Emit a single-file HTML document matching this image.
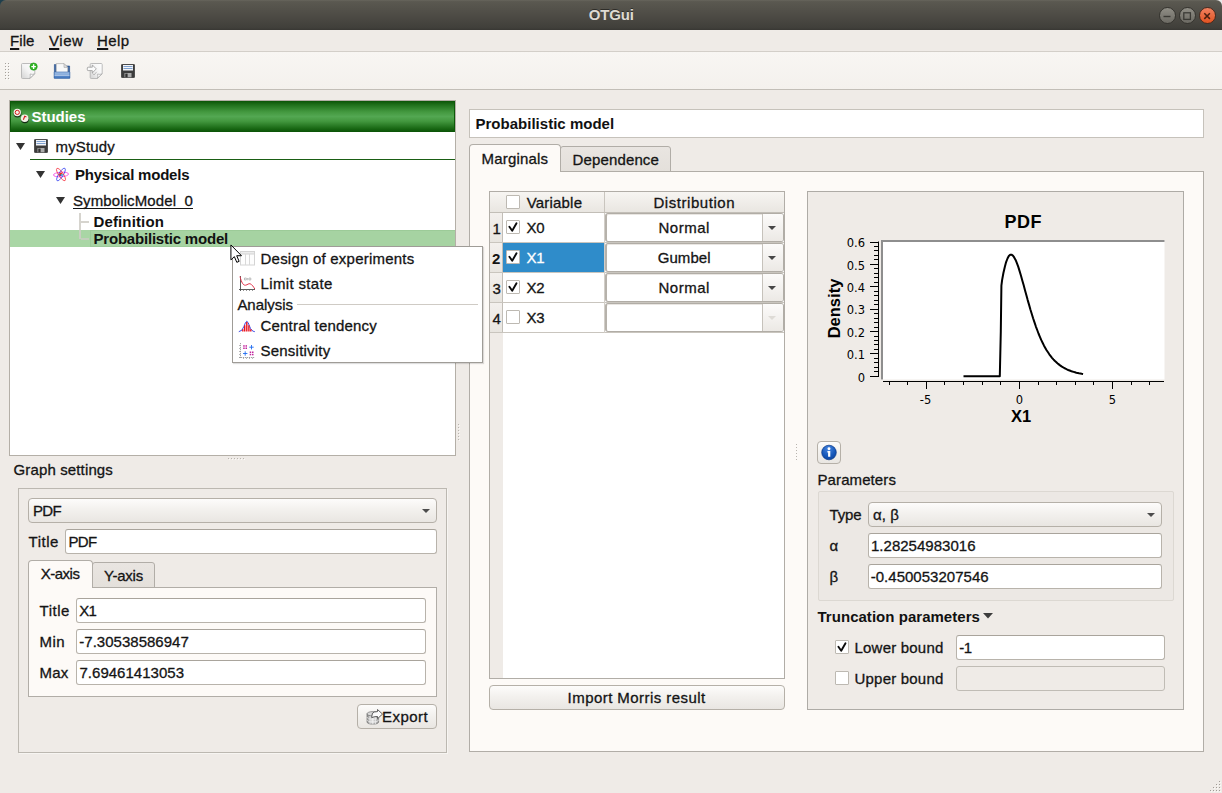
<!DOCTYPE html>
<html lang="en"><head><meta charset="utf-8"><title>OTGui</title>
<style>
html,body{margin:0;padding:0;}
body{width:1222px;height:793px;position:relative;overflow:hidden;background:#efebe7;font-family:"Liberation Sans", "DejaVu Sans", sans-serif;font-size:15px;}
body>div,.abs,.t{position:absolute;box-sizing:border-box;}
.t{white-space:nowrap;line-height:20px;height:20px;}
.t u{text-decoration-skip-ink:none;text-decoration:underline;text-underline-offset:1.500px;text-decoration-thickness:1.500px;}
#corner-l{left:0;top:0;width:8px;height:8px;background:#1f3f4c;}
#corner-r{left:1214px;top:0;width:8px;height:8px;background:#e9e9e9;}
#titlebar{left:0;top:0;width:1222px;height:30px;border-radius:6px 6px 0 0;background:linear-gradient(#6a685f 0,#5d5b53 1px,#5a5850 2px,#4c4a44 55%,#403f3a 93%,#383733 100%);}
.wbtn{width:17px;height:17px;border-radius:50%;border:1px solid #35342f;}
.wbtn.min,.wbtn.max{background:linear-gradient(#8f8d85,#6c6a63);}
.wbtn.close{background:linear-gradient(#f08160,#e25321);border-color:#4a2a1e;}
.btn{background:linear-gradient(#fdfcfb,#f3f1ee 45%,#e9e6e2);border:1px solid #b5b0a8;border-radius:4px;}
.edit{background:#fff;border:1px solid #b8b3ab;border-top-color:#a9a49c;border-radius:3px;}
</style></head>
<body>
<div id="corner-l"></div><div id="corner-r"></div>
<div id="titlebar"></div>
<span class="t" id="t_title" style="top:4.70px;font-size:15px;font-weight:bold;color:#dfdbd2;letter-spacing:-0.166px;text-shadow:0 -1px 0 rgba(0,0,0,.45);left:611.3px;transform:translateX(-50%);">OTGui</span>
<div class="wbtn min" style="left:1158.9px;top:6.500px"></div>
<div class="wbtn max" style="left:1179.0px;top:6.500px"></div>
<div class="wbtn close" style="left:1199.1px;top:6.500px"></div>
<svg class="abs" style="left:1158.400px;top:6.500px" width="60" height="18" viewBox="0 0 60 18">
<path d="M5.5 9.5h7" stroke="#3b3a35" stroke-width="1.4" fill="none"/>
<rect x="25.8" y="5.8" width="6.6" height="6.6" stroke="#3b3a35" stroke-width="1.3" fill="none"/>
<path d="M46.3 6.3l5.6 5.6M51.9 6.3l-5.6 5.6" stroke="#4a1f0f" stroke-width="1.5" fill="none"/>
</svg>
<div style="left:0px;top:30px;width:1222px;height:22px;background:#efebe7;border-bottom:1px solid #d3cfc9;"></div>
<span class="t" id="t_m_file" style="top:31.00px;font-size:15px;font-weight:normal;color:#141414;letter-spacing:0.078px;-webkit-text-stroke:.3px;left:10px;"><u>F</u>ile</span>
<span class="t" id="t_m_view" style="top:31.00px;font-size:15px;font-weight:normal;color:#141414;letter-spacing:0.562px;-webkit-text-stroke:.3px;left:49px;"><u>V</u>iew</span>
<span class="t" id="t_m_help" style="top:31.00px;font-size:15px;font-weight:normal;color:#141414;letter-spacing:0.406px;-webkit-text-stroke:.3px;left:97px;"><u>H</u>elp</span>
<div style="left:0px;top:52px;width:1222px;height:38px;background:linear-gradient(#f8f6f3,#f4f1ed);border-bottom:1px solid #c2beb7;"></div>
<div style="left:5px;top:63px;width:1px;height:1px;background:#a5a19b;"></div>
<div style="left:6px;top:64px;width:1px;height:1px;background:#fdfcfb;"></div>
<div style="left:8px;top:63px;width:1px;height:1px;background:#a5a19b;"></div>
<div style="left:9px;top:64px;width:1px;height:1px;background:#fdfcfb;"></div>
<div style="left:5px;top:66px;width:1px;height:1px;background:#a5a19b;"></div>
<div style="left:6px;top:67px;width:1px;height:1px;background:#fdfcfb;"></div>
<div style="left:8px;top:66px;width:1px;height:1px;background:#a5a19b;"></div>
<div style="left:9px;top:67px;width:1px;height:1px;background:#fdfcfb;"></div>
<div style="left:5px;top:69px;width:1px;height:1px;background:#a5a19b;"></div>
<div style="left:6px;top:70px;width:1px;height:1px;background:#fdfcfb;"></div>
<div style="left:8px;top:69px;width:1px;height:1px;background:#a5a19b;"></div>
<div style="left:9px;top:70px;width:1px;height:1px;background:#fdfcfb;"></div>
<div style="left:5px;top:72px;width:1px;height:1px;background:#a5a19b;"></div>
<div style="left:6px;top:73px;width:1px;height:1px;background:#fdfcfb;"></div>
<div style="left:8px;top:72px;width:1px;height:1px;background:#a5a19b;"></div>
<div style="left:9px;top:73px;width:1px;height:1px;background:#fdfcfb;"></div>
<div style="left:5px;top:75px;width:1px;height:1px;background:#a5a19b;"></div>
<div style="left:6px;top:76px;width:1px;height:1px;background:#fdfcfb;"></div>
<div style="left:8px;top:75px;width:1px;height:1px;background:#a5a19b;"></div>
<div style="left:9px;top:76px;width:1px;height:1px;background:#fdfcfb;"></div>
<div style="left:5px;top:78px;width:1px;height:1px;background:#a5a19b;"></div>
<div style="left:6px;top:79px;width:1px;height:1px;background:#fdfcfb;"></div>
<div style="left:8px;top:78px;width:1px;height:1px;background:#a5a19b;"></div>
<div style="left:9px;top:79px;width:1px;height:1px;background:#fdfcfb;"></div>
<svg class="abs" style="left:20px;top:62px" width="18" height="18" viewBox="0 0 18 18">
<defs><linearGradient id="pg" x1="1" y1="0" x2="0" y2="1"><stop offset="0" stop-color="#ffffff"/><stop offset=".5" stop-color="#f4f4f4"/><stop offset="1" stop-color="#d2d2d2"/></linearGradient></defs>
<path d="M1.500 2.500q0-1 1-1h11.300q1 0 1 1v9.200l-4.800 4.800h-7.500q-1 0-1-1z" fill="url(#pg)" stroke="#b4b4b4" stroke-width=".9"/>
<path d="M9.800 16.300q.8-1.800.3-4.300q2.300.9 4.500-.2z" fill="#fdfdfd" stroke="#a6a6a6" stroke-width=".7" stroke-linejoin="round"/>
<circle cx="13.600" cy="4.600" r="3.700" fill="#2db320" stroke="#1b9412" stroke-width=".5"/>
<path d="M11.300 4.600h4.600M13.600 2.300v4.600" stroke="#fff" stroke-width="1.400"/>
</svg>
<svg class="abs" style="left:53px;top:62px" width="18" height="18" viewBox="0 0 18 18">
<defs><linearGradient id="og" x1="0" y1="0" x2="0" y2="1"><stop offset="0" stop-color="#a9c5e8"/><stop offset=".45" stop-color="#7ba3d8"/><stop offset=".55" stop-color="#5b8acb"/><stop offset="1" stop-color="#4377bd"/></linearGradient></defs>
<path d="M1.400 2.500h3.200l1 1.500h11v12h-15.200z" fill="#2f5c9d" stroke="#264f8b" stroke-width=".6"/>
<path d="M3.200 1.600h7.800l3.800 3.800v6.600h-11.600z" fill="#f8f8f8" stroke="#aaa" stroke-width=".7"/>
<path d="M11 1.600v3.800h3.800z" fill="#e2e2e2" stroke="#a2a2a2" stroke-width=".6" stroke-linejoin="round"/>
<path d="M1.200 16.300v-6.300h15.600v6.300z" fill="url(#og)" stroke="#3567ab" stroke-width=".6"/>
<path d="M1.500 13.300h15" stroke="#c3d6ef" stroke-width=".9"/>
</svg>
<svg class="abs" style="left:86px;top:62px" width="18" height="18" viewBox="0 0 18 18">
<path d="M4.200 2.500q0-1 1-1h10q1 0 1 1v9.200l-4.800 4.800h-6.200q-1 0-1-1z" fill="url(#pg)" stroke="#b4b4b4" stroke-width=".9"/>
<path d="M11.300 16.300q.8-1.800.3-4.300q2.300.9 4.500-.2z" fill="#fdfdfd" stroke="#a6a6a6" stroke-width=".7" stroke-linejoin="round"/>
<path d="M1.300 6q0-.8.800-.8h4.200v-2.300l4 4l-4 4v-2.300h-4.200q-.8 0-.8-.8z" fill="#fbfbfb" stroke="#9a9a9a" stroke-width=".8" stroke-linejoin="round"/>
<path d="M6.300 11.200l1.800 1.800l2.600-3.200" fill="none" stroke="#b8b8b8" stroke-width=".9"/>
</svg>
<svg class="abs" style="left:121px;top:64px" width="14" height="14" viewBox="0 0 14 14"><rect x=".3" y=".3" width="13.400" height="13.400" rx="1.200" fill="#3c3c3c" stroke="#2b2b2b" stroke-width=".6"/>
<rect x="2" y="1" width="10" height="5.500" fill="#f3f5f9"/>
<rect x="2.500" y="2" width="9" height="1" fill="#7fa1cf"/><rect x="2.500" y="4" width="9" height="1" fill="#7fa1cf"/>
<rect x="3.500" y="9" width="7" height="4.300" fill="#ababab"/>
<rect x="4.300" y="9.600" width="2.300" height="3.700" fill="#303030"/></svg>
<div style="left:9px;top:100px;width:447px;height:356px;background:#fff;border:1px solid #b4afa7;"></div>
<div style="left:10px;top:101px;width:445px;height:31px;background:linear-gradient(#0b5407 0%,#1f6f1b 12%,#43983f 35%,#53a752 50%,#43983f 65%,#176612 90%,#0a5206 100%);box-shadow:inset 1px 0 #0d5909,inset -1px 0 #0d5909;"></div>
<svg class="abs" style="left:12px;top:107px" width="18" height="18" viewBox="0 0 18 18">
<circle cx="5.500" cy="6.600" r="3.900" fill="#07150a" opacity=".8"/><circle cx="5.300" cy="5.500" r="3.700" fill="#f3f2e6"/>
<circle cx="5.300" cy="5.400" r="2.100" fill="none" stroke="#d31a1a" stroke-width="1"/>
<circle cx="12.900" cy="12.300" r="3.900" fill="#07150a" opacity=".8"/><circle cx="12.700" cy="11.200" r="3.800" fill="#f3f2e6"/>
<path d="M11.400 12.700L12.700 9.300L14.400 9.900" fill="none" stroke="#d31a1a" stroke-width="1.100"/>
</svg>
<span class="t" id="t_studies" style="top:107.20px;font-size:15px;font-weight:bold;color:#fff;letter-spacing:-0.027px;left:31.5px;">Studies</span>
<svg class="abs" style="left:15.500px;top:142.800px" width="9" height="7"><path d="M0 0h9l-4.500 7z" fill="#333"/></svg>
<svg class="abs" style="left:34px;top:139px" width="14" height="14" viewBox="0 0 14 14"><rect x=".3" y=".3" width="13.400" height="13.400" rx="1.200" fill="#3c3c3c" stroke="#2b2b2b" stroke-width=".6"/>
<rect x="2" y="1" width="10" height="5.500" fill="#f3f5f9"/>
<rect x="2.500" y="2" width="9" height="1" fill="#7fa1cf"/><rect x="2.500" y="4" width="9" height="1" fill="#7fa1cf"/>
<rect x="3.500" y="9" width="7" height="4.300" fill="#ababab"/>
<rect x="4.300" y="9.600" width="2.300" height="3.700" fill="#303030"/></svg>
<span class="t" id="t_mystudy" style="top:136.90px;font-size:15px;font-weight:normal;color:#141414;letter-spacing:0.163px;-webkit-text-stroke:.3px;left:55.5px;">myStudy</span>
<div style="left:30px;top:159px;width:425px;height:1px;background:#1a5e14;"></div>
<svg class="abs" style="left:35.500px;top:170.800px" width="9" height="7"><path d="M0 0h9l-4.500 7z" fill="#333"/></svg>
<svg class="abs" style="left:52px;top:166px" width="18" height="17" viewBox="0 0 18 17">
<g fill="none" stroke-width=".75">
<ellipse cx="9" cy="8.500" rx="7.600" ry="2.300" stroke="#f03ae0" transform="rotate(-4 9 8.500)"/>
<ellipse cx="9" cy="8.500" rx="7.300" ry="2.300" stroke="#3540f0" transform="rotate(-58 9 8.500)"/>
<ellipse cx="9" cy="8.500" rx="7.300" ry="2.300" stroke="#f5303f" transform="rotate(56 9 8.500)"/>
</g><circle cx="8.800" cy="8.300" r="1.700" fill="#e8391c"/><circle cx="9.900" cy="9" r="1" fill="#35b9ea"/><circle cx="8" cy="9.300" r=".8" fill="#2a35d8"/>
</svg>
<span class="t" id="t_physmodels" style="top:164.60px;font-size:15px;font-weight:bold;color:#111;letter-spacing:-0.218px;left:75px;">Physical models</span>
<svg class="abs" style="left:55.500px;top:196.800px" width="9" height="7"><path d="M0 0h9l-4.500 7z" fill="#333"/></svg>
<span class="t" id="t_symbolic" style="top:191.00px;font-size:15px;font-weight:normal;color:#141414;letter-spacing:0.107px;text-decoration:underline;text-underline-offset:2px;text-decoration-skip-ink:none;-webkit-text-stroke:.3px;left:73px;">SymbolicModel_0</span>
<div style="left:10px;top:230px;width:445px;height:17px;background:#a9d6a5;"></div>
<div style="left:90px;top:230px;width:365px;height:17px;background:#a6d3a2;border:1px solid #9ccb98;border-right:0;"></div>
<div style="left:79px;top:213px;width:2px;height:26px;background:#cfccc6;opacity:.85;"></div>
<div style="left:81px;top:221px;width:8px;height:2px;background:#cfccc6;opacity:.85;"></div>
<div style="left:81px;top:238px;width:8px;height:2px;background:#cfccc6;opacity:.7;"></div>
<span class="t" id="t_definition" style="top:212.00px;font-size:15px;font-weight:bold;color:#111;letter-spacing:0.134px;left:93.5px;">Definition</span>
<span class="t" id="t_probmodel1" style="top:228.90px;font-size:15px;font-weight:bold;color:#111;letter-spacing:-0.204px;left:93.5px;">Probabilistic model</span>
<div style="left:228px;top:458px;width:1px;height:1px;background:#b9b5af;"></div>
<div style="left:229px;top:459px;width:1px;height:1px;background:#fbf9f7;"></div>
<div style="left:231px;top:458px;width:1px;height:1px;background:#b9b5af;"></div>
<div style="left:232px;top:459px;width:1px;height:1px;background:#fbf9f7;"></div>
<div style="left:234px;top:458px;width:1px;height:1px;background:#b9b5af;"></div>
<div style="left:235px;top:459px;width:1px;height:1px;background:#fbf9f7;"></div>
<div style="left:237px;top:458px;width:1px;height:1px;background:#b9b5af;"></div>
<div style="left:238px;top:459px;width:1px;height:1px;background:#fbf9f7;"></div>
<div style="left:240px;top:458px;width:1px;height:1px;background:#b9b5af;"></div>
<div style="left:241px;top:459px;width:1px;height:1px;background:#fbf9f7;"></div>
<div style="left:243px;top:458px;width:1px;height:1px;background:#b9b5af;"></div>
<div style="left:244px;top:459px;width:1px;height:1px;background:#fbf9f7;"></div>
<div style="left:458px;top:424px;width:1px;height:1px;background:#b9b5af;"></div>
<div style="left:459px;top:425px;width:1px;height:1px;background:#fbf9f7;"></div>
<div style="left:458px;top:427px;width:1px;height:1px;background:#b9b5af;"></div>
<div style="left:459px;top:428px;width:1px;height:1px;background:#fbf9f7;"></div>
<div style="left:458px;top:430px;width:1px;height:1px;background:#b9b5af;"></div>
<div style="left:459px;top:431px;width:1px;height:1px;background:#fbf9f7;"></div>
<div style="left:458px;top:433px;width:1px;height:1px;background:#b9b5af;"></div>
<div style="left:459px;top:434px;width:1px;height:1px;background:#fbf9f7;"></div>
<div style="left:458px;top:436px;width:1px;height:1px;background:#b9b5af;"></div>
<div style="left:459px;top:437px;width:1px;height:1px;background:#fbf9f7;"></div>
<div style="left:458px;top:439px;width:1px;height:1px;background:#b9b5af;"></div>
<div style="left:459px;top:440px;width:1px;height:1px;background:#fbf9f7;"></div>
<span class="t" id="t_graphsettings" style="top:460.00px;font-size:15px;font-weight:normal;color:#141414;letter-spacing:0.138px;-webkit-text-stroke:.3px;left:13.5px;">Graph settings</span>
<div style="left:18px;top:488px;width:429px;height:265px;border:1px solid #bcb8b1;box-shadow:1px 1px 0 #f7f5f2;"></div>
<div class="btn" style="left:28px;top:498px;width:409px;height:25px;"></div>
<svg class="abs" style="left:422px;top:509px" width="8" height="4"><path d="M0 0h8l-4 4z" fill="#4c4c4c"/></svg>
<span class="t" id="t_gs_pdf" style="top:501.00px;font-size:15px;font-weight:normal;color:#141414;letter-spacing:-0.667px;-webkit-text-stroke:.3px;left:33px;">PDF</span>
<span class="t" id="t_gs_title" style="top:531.50px;font-size:15px;font-weight:normal;color:#141414;letter-spacing:0.544px;-webkit-text-stroke:.3px;left:28.5px;">Title</span>
<div class="edit" style="left:65px;top:529px;width:372px;height:25px;"></div>
<span class="t" id="t_gs_pdf2" style="top:531.50px;font-size:15px;font-weight:normal;color:#141414;letter-spacing:-0.667px;-webkit-text-stroke:.3px;left:68.5px;">PDF</span>
<div style="left:28px;top:587px;width:409px;height:110px;background:#fdfaf7;border:1px solid #b1ada7;"></div>
<div style="left:92px;top:562px;width:63px;height:26px;background:linear-gradient(#e9e5e1,#e4e0db);border:1px solid #b1ada7;border-radius:3px 3px 0 0;"></div>
<div style="left:28px;top:560px;width:65px;height:28px;background:#fdfaf7;border:1px solid #b1ada7;border-bottom:0;border-radius:4px 4px 0 0;"></div>
<span class="t" id="t_xaxis" style="top:564.30px;font-size:15px;font-weight:normal;color:#141414;letter-spacing:-0.481px;-webkit-text-stroke:.3px;left:40.7px;">X-axis</span>
<span class="t" id="t_yaxis" style="top:566.20px;font-size:15px;font-weight:normal;color:#141414;letter-spacing:-0.219px;-webkit-text-stroke:.3px;left:104px;">Y-axis</span>
<span class="t" id="t_ax_title" style="top:600.50px;font-size:15px;font-weight:normal;color:#141414;letter-spacing:0.544px;-webkit-text-stroke:.3px;left:39.5px;">Title</span>
<div class="edit" style="left:76px;top:598px;width:350px;height:25px;"></div>
<span class="t" id="t_ax_x1" style="top:600.50px;font-size:15px;font-weight:normal;color:#141414;letter-spacing:-0.680px;-webkit-text-stroke:.3px;left:79.3px;">X1</span>
<span class="t" id="t_ax_min" style="top:631.50px;font-size:15px;font-weight:normal;color:#141414;letter-spacing:0.443px;-webkit-text-stroke:.3px;left:39.5px;">Min</span>
<div class="edit" style="left:76px;top:629px;width:350px;height:25px;"></div>
<span class="t" id="t_ax_minv" style="top:631.50px;font-size:15px;font-weight:normal;color:#141414;letter-spacing:0.016px;-webkit-text-stroke:.3px;left:79.3px;">-7.30538586947</span>
<span class="t" id="t_ax_max" style="top:662.50px;font-size:15px;font-weight:normal;color:#141414;letter-spacing:0.219px;-webkit-text-stroke:.3px;left:39.5px;">Max</span>
<div class="edit" style="left:76px;top:660px;width:350px;height:25px;"></div>
<span class="t" id="t_ax_maxv" style="top:662.50px;font-size:15px;font-weight:normal;color:#141414;letter-spacing:0.017px;-webkit-text-stroke:.3px;left:79.5px;">7.69461413053</span>
<div class="btn" style="left:357px;top:704px;width:80px;height:25px;"></div>
<svg class="abs" style="left:365.600px;top:708.700px" width="18" height="17" viewBox="0 0 18 17">
<defs><linearGradient id="cg" x1="0" y1="0" x2="1" y2="0"><stop offset="0" stop-color="#8d8d8d"/><stop offset=".45" stop-color="#e6e6e6"/><stop offset="1" stop-color="#9a9a9a"/></linearGradient></defs>
<path d="M1 4.800v8q0 2.300 5.800 2.300t5.800-2.300v-8z" fill="url(#cg)" stroke="#6e6e6e" stroke-width=".7"/>
<ellipse cx="6.800" cy="4.800" rx="5.800" ry="2.200" fill="#d9d9d9" stroke="#6e6e6e" stroke-width=".7"/>
<path d="M1 8q0 2.200 5.800 2.200t5.800-2.200M1 10.700q0 2.200 5.800 2.200t5.800-2.200M4 7v8M6.800 7.300v8M9.600 7v8" fill="none" stroke="#f4f4f4" stroke-width=".7"/>
<path d="M6.500 4.200q1.500-1.700 5-1.600v-2.100l5 4.600l-5 4.600v-2.200q-3.200-.2-5.800 1.200q.2-2.600.8-4.500z" fill="#fbfbfb" stroke="#4d4d4d" stroke-width=".9" stroke-linejoin="round"/>
</svg>
<span class="t" id="t_export" style="top:707.00px;font-size:15px;font-weight:normal;color:#141414;letter-spacing:0.440px;-webkit-text-stroke:.3px;left:382px;">Export</span>
<div style="left:469px;top:109px;width:735px;height:29px;background:#fff;border:1px solid #c6c2bb;"></div>
<span class="t" id="t_probmodel2" style="top:114.00px;font-size:15px;font-weight:bold;color:#111;letter-spacing:0.022px;left:475.4px;">Probabilistic model</span>
<div style="left:469px;top:171px;width:735px;height:581px;background:#fdfaf7;border:1px solid #b1ada7;"></div>
<div style="left:560px;top:146px;width:111px;height:26px;background:linear-gradient(#e9e5e1,#e4e0db);border:1px solid #b1ada7;border-radius:3px 3px 0 0;"></div>
<div style="left:469px;top:144px;width:92px;height:28px;background:#fdfaf7;border:1px solid #b1ada7;border-bottom:0;border-radius:4px 4px 0 0;"></div>
<span class="t" id="t_marginals" style="top:148.80px;font-size:15px;font-weight:normal;color:#141414;letter-spacing:0.185px;-webkit-text-stroke:.3px;left:481.6px;">Marginals</span>
<span class="t" id="t_dependence" style="top:150.20px;font-size:15px;font-weight:normal;color:#141414;letter-spacing:0.142px;-webkit-text-stroke:.3px;left:572.5px;">Dependence</span>
<div style="left:489px;top:191px;width:296px;height:488px;background:#fff;border:1px solid #b1ada7;"></div>
<div style="left:490px;top:192px;width:294px;height:21px;background:linear-gradient(#f7f5f2,#e9e6e1);border-bottom:1px solid #c2beb7;"></div>
<div style="left:490px;top:213px;width:13px;height:465px;background:#efebe7;"></div>
<div style="left:490px;top:192px;width:13px;height:21px;background:linear-gradient(#f7f5f2,#e9e6e1);border-bottom:1px solid #c2beb7;"></div>
<div style="left:604px;top:192px;width:1px;height:20px;background:#c9c5be;"></div>
<div style="left:490px;top:242px;width:294px;height:1px;background:#c9c5be;"></div>
<div style="left:490px;top:213px;width:13px;height:29px;background:linear-gradient(#f3f0ed,#e8e5e0);border-right:1px solid #c2beb7;"></div>
<div style="left:490px;top:272px;width:294px;height:1px;background:#c9c5be;"></div>
<div style="left:490px;top:243px;width:13px;height:29px;background:linear-gradient(#f3f0ed,#e8e5e0);border-right:1px solid #c2beb7;"></div>
<div style="left:490px;top:302px;width:294px;height:1px;background:#c9c5be;"></div>
<div style="left:490px;top:273px;width:13px;height:29px;background:linear-gradient(#f3f0ed,#e8e5e0);border-right:1px solid #c2beb7;"></div>
<div style="left:490px;top:332px;width:294px;height:1px;background:#c9c5be;"></div>
<div style="left:490px;top:303px;width:13px;height:29px;background:linear-gradient(#f3f0ed,#e8e5e0);border-right:1px solid #c2beb7;"></div>
<div style="left:604px;top:213px;width:1px;height:120px;background:#d2cec8;"></div>
<div style="left:503px;top:243px;width:101px;height:29px;background:#2f8cca;"></div>
<div style="left:506px;top:195px;width:14px;height:14px;background:#fff;border:1px solid #bdb9b2;border-radius:1px;"></div>
<span class="t" id="t_variable" style="top:192.50px;font-size:15px;font-weight:normal;color:#141414;letter-spacing:0.197px;-webkit-text-stroke:.3px;left:526.7px;">Variable</span>
<span class="t" id="t_distribution" style="top:192.50px;font-size:15px;font-weight:normal;color:#141414;letter-spacing:0.556px;-webkit-text-stroke:.3px;left:694.3px;transform:translateX(-50%);">Distribution</span>
<span class="t" id="t_rn0" style="top:219.00px;font-size:15px;font-weight:normal;color:#141414;letter-spacing:-0.844px;-webkit-text-stroke:.3px;left:496.2px;transform:translateX(-50%);">1</span>
<div style="left:506px;top:220px;width:14px;height:14px;background:#fff;border:1px solid #bdb9b2;border-radius:1px;"></div><svg class="abs" style="left:506px;top:220px" width="14" height="14" viewBox="0 0 14 14"><path d="M3.400 6.700L6.200 10.800L10.500 3.300" fill="none" stroke="#0c0c0c" stroke-width="1.900" stroke-linecap="round" stroke-linejoin="round"/></svg>
<span class="t" id="t_xn0" style="top:218.30px;font-size:15px;font-weight:normal;color:#141414;letter-spacing:-0.180px;-webkit-text-stroke:.3px;left:526.4px;">X0</span>
<div style="left:605px;top:213px;width:179px;height:29px;background:#fff;border:1px solid #b1ada6;border-left:2px solid #b6b2ab;border-radius:3px;box-shadow:inset 0 1px 0 #e9e6e2;"></div>
<div style="left:762px;top:214px;width:21px;height:27px;background:linear-gradient(#fcfbfa,#ece9e5);border-left:1px solid #c6c2bb;border-radius:0 2px 2px 0;"></div>
<svg class="abs" style="left:768px;top:226px" width="8" height="4"><path d="M0 0h8l-4 4z" fill="#474747"/></svg>
<span class="t" id="t_dist0" style="top:218.30px;font-size:15px;font-weight:normal;color:#141414;letter-spacing:0.493px;-webkit-text-stroke:.3px;left:684.2px;transform:translateX(-50%);">Normal</span>
<span class="t" id="t_rn1" style="top:249.00px;font-size:15px;font-weight:bold;color:#141414;letter-spacing:0.156px;left:496.2px;transform:translateX(-50%);">2</span>
<div style="left:506px;top:250px;width:14px;height:14px;background:#fff;border:1px solid #bdb9b2;border-radius:1px;"></div><svg class="abs" style="left:506px;top:250px" width="14" height="14" viewBox="0 0 14 14"><path d="M3.400 6.700L6.200 10.800L10.500 3.300" fill="none" stroke="#0c0c0c" stroke-width="1.900" stroke-linecap="round" stroke-linejoin="round"/></svg>
<span class="t" id="t_xn1" style="top:248.30px;font-size:15px;font-weight:normal;color:#fff;letter-spacing:-0.180px;-webkit-text-stroke:.3px;left:526.4px;">X1</span>
<div style="left:605px;top:243px;width:179px;height:29px;background:#fff;border:1px solid #b1ada6;border-left:2px solid #b6b2ab;border-radius:3px;box-shadow:inset 0 1px 0 #e9e6e2;"></div>
<div style="left:762px;top:244px;width:21px;height:27px;background:linear-gradient(#fcfbfa,#ece9e5);border-left:1px solid #c6c2bb;border-radius:0 2px 2px 0;"></div>
<svg class="abs" style="left:768px;top:256px" width="8" height="4"><path d="M0 0h8l-4 4z" fill="#474747"/></svg>
<span class="t" id="t_dist1" style="top:248.30px;font-size:15px;font-weight:normal;color:#141414;letter-spacing:0.078px;-webkit-text-stroke:.3px;left:684.2px;transform:translateX(-50%);">Gumbel</span>
<span class="t" id="t_rn2" style="top:279.00px;font-size:15px;font-weight:normal;color:#141414;letter-spacing:-0.844px;-webkit-text-stroke:.3px;left:496.2px;transform:translateX(-50%);">3</span>
<div style="left:506px;top:280px;width:14px;height:14px;background:#fff;border:1px solid #bdb9b2;border-radius:1px;"></div><svg class="abs" style="left:506px;top:280px" width="14" height="14" viewBox="0 0 14 14"><path d="M3.400 6.700L6.200 10.800L10.500 3.300" fill="none" stroke="#0c0c0c" stroke-width="1.900" stroke-linecap="round" stroke-linejoin="round"/></svg>
<span class="t" id="t_xn2" style="top:278.30px;font-size:15px;font-weight:normal;color:#141414;letter-spacing:-0.180px;-webkit-text-stroke:.3px;left:526.4px;">X2</span>
<div style="left:605px;top:273px;width:179px;height:29px;background:#fff;border:1px solid #b1ada6;border-left:2px solid #b6b2ab;border-radius:3px;box-shadow:inset 0 1px 0 #e9e6e2;"></div>
<div style="left:762px;top:274px;width:21px;height:27px;background:linear-gradient(#fcfbfa,#ece9e5);border-left:1px solid #c6c2bb;border-radius:0 2px 2px 0;"></div>
<svg class="abs" style="left:768px;top:286px" width="8" height="4"><path d="M0 0h8l-4 4z" fill="#474747"/></svg>
<span class="t" id="t_dist2" style="top:278.30px;font-size:15px;font-weight:normal;color:#141414;letter-spacing:0.493px;-webkit-text-stroke:.3px;left:684.2px;transform:translateX(-50%);">Normal</span>
<span class="t" id="t_rn3" style="top:309.00px;font-size:15px;font-weight:normal;color:#141414;letter-spacing:-0.844px;-webkit-text-stroke:.3px;left:496.2px;transform:translateX(-50%);">4</span>
<div style="left:506px;top:310px;width:14px;height:14px;background:#fff;border:1px solid #bdb9b2;border-radius:1px;"></div>
<span class="t" id="t_xn3" style="top:308.30px;font-size:15px;font-weight:normal;color:#141414;letter-spacing:-0.180px;-webkit-text-stroke:.3px;left:526.4px;">X3</span>
<div style="left:605px;top:303px;width:179px;height:29px;background:#fff;border:1px solid #b1ada6;border-left:2px solid #b6b2ab;border-radius:3px;box-shadow:inset 0 1px 0 #e9e6e2;"></div>
<div style="left:762px;top:304px;width:21px;height:27px;background:linear-gradient(#fcfbfa,#ece9e5);border-left:1px solid #c6c2bb;border-radius:0 2px 2px 0;"></div>
<svg class="abs" style="left:768px;top:316px" width="8" height="4"><path d="M0 0h8l-4 4z" fill="#dedbd6"/></svg>
<div class="btn" style="left:489px;top:685px;width:296px;height:25px;"></div>
<span class="t" id="t_importmorris" style="top:687.70px;font-size:15px;font-weight:normal;color:#141414;letter-spacing:0.441px;-webkit-text-stroke:.3px;left:636.6px;transform:translateX(-50%);">Import Morris result</span>
<div style="left:796px;top:444px;width:1px;height:1px;background:#b9b5af;"></div>
<div style="left:797px;top:445px;width:1px;height:1px;background:#fbf9f7;"></div>
<div style="left:796px;top:447px;width:1px;height:1px;background:#b9b5af;"></div>
<div style="left:797px;top:448px;width:1px;height:1px;background:#fbf9f7;"></div>
<div style="left:796px;top:450px;width:1px;height:1px;background:#b9b5af;"></div>
<div style="left:797px;top:451px;width:1px;height:1px;background:#fbf9f7;"></div>
<div style="left:796px;top:453px;width:1px;height:1px;background:#b9b5af;"></div>
<div style="left:797px;top:454px;width:1px;height:1px;background:#fbf9f7;"></div>
<div style="left:796px;top:456px;width:1px;height:1px;background:#b9b5af;"></div>
<div style="left:797px;top:457px;width:1px;height:1px;background:#fbf9f7;"></div>
<div style="left:796px;top:459px;width:1px;height:1px;background:#b9b5af;"></div>
<div style="left:797px;top:460px;width:1px;height:1px;background:#fbf9f7;"></div>
<div style="left:807px;top:191px;width:377px;height:519px;background:#efebe7;border:1px solid #aeaba6;"></div>
<span class="t" id="t_pdftitle" style="top:212.00px;font-size:18px;font-weight:bold;color:#000;letter-spacing:0.500px;left:1023.3px;transform:translateX(-50%);">PDF</span>
<svg class="abs" style="left:800px;top:180px" width="400" height="260" viewBox="0 0 400 260" font-family='"DejaVu Sans","Liberation Sans",sans-serif'><rect x="81" y="60" width="283.5" height="139.5" fill="#fff"/><path d="M82 199.500v-138.500h282.500" fill="none" stroke="#8e8e8e" stroke-width="2"/><path d="M78.500 61.500v135.300" stroke="#000" stroke-width="1" fill="none"/><path d="M70 196.5h9M74 191.5h5M74 187.5h5M74 182.5h5M74 178.5h5M70 173.5h9M74 169.5h5M74 164.5h5M74 160.5h5M74 156.5h5M70 151.5h9M74 147.5h5M74 142.5h5M74 138.5h5M74 133.5h5M70 129.5h9M74 124.5h5M74 120.5h5M74 115.5h5M74 111.5h5M70 106.5h9M74 102.5h5M74 97.5h5M74 93.5h5M74 88.5h5M70 84.5h9M74 79.5h5M74 75.5h5M74 70.5h5M74 66.5h5M70 62.5h9" stroke="#000" stroke-width="1" fill="none"/><text x="65" y="201.5" font-size="11.500" text-anchor="end" fill="#000">0</text><text x="65" y="179.1" font-size="11.500" text-anchor="end" fill="#000">0.1</text><text x="65" y="156.7" font-size="11.500" text-anchor="end" fill="#000">0.2</text><text x="65" y="134.4" font-size="11.500" text-anchor="end" fill="#000">0.3</text><text x="65" y="112.0" font-size="11.500" text-anchor="end" fill="#000">0.4</text><text x="65" y="89.6" font-size="11.500" text-anchor="end" fill="#000">0.5</text><text x="65" y="67.2" font-size="11.500" text-anchor="end" fill="#000">0.6</text><path d="M83 201.500h281" stroke="#000" stroke-width="1" fill="none"/><path d="M89.5 201v4M107.5 201v4M126.5 201v8M144.5 201v4M163.5 201v4M182.5 201v4M200.5 201v4M219.5 201v8M238.5 201v4M256.5 201v4M275.5 201v4M293.5 201v4M312.5 201v8M331.5 201v4M349.5 201v4" stroke="#000" stroke-width="1" fill="none"/><text x="125.5" y="224" font-size="11.500" text-anchor="middle" fill="#000">-5</text><text x="219.4" y="224" font-size="11.500" text-anchor="middle" fill="#000">0</text><text x="312.5" y="224" font-size="11.500" text-anchor="middle" fill="#000">5</text><path d="M163.5 196.3 L199.8 196.3 L200.8 151.5 L201.4 105.7 L202.1 100.1 L203.4 93.0 L204.8 87.0 L206.1 82.1 L207.5 78.5 L208.8 76.1 L210.2 74.8 L211.5 74.7 L212.9 75.6 L214.2 77.4 L215.6 79.9 L216.9 83.2 L218.3 86.9 L219.6 91.1 L221.0 95.7 L222.3 100.4 L223.7 105.3 L225.0 110.2 L226.4 115.2 L227.7 120.1 L229.1 124.9 L230.4 129.5 L231.8 134.0 L233.1 138.3 L234.5 142.4 L235.8 146.3 L237.2 150.0 L238.5 153.5 L239.9 156.8 L241.2 159.9 L242.6 162.7 L243.9 165.4 L245.3 167.9 L246.6 170.2 L248.0 172.3 L249.3 174.3 L250.7 176.1 L252.0 177.8 L253.4 179.4 L254.7 180.8 L256.1 182.1 L257.4 183.3 L258.8 184.4 L260.1 185.4 L261.5 186.4 L262.8 187.2 L264.2 188.0 L265.5 188.7 L266.9 189.4 L268.2 190.0 L269.6 190.5 L270.9 191.0 L272.3 191.5 L273.6 191.9 L275.0 192.3 L276.3 192.7 L277.7 193.0 L279.0 193.3 L280.4 193.5 L281.7 193.8 L283.1 194.0" fill="none" stroke="#000" stroke-width="2" stroke-linejoin="round"/><text x="221" y="242" font-size="16.500" font-weight="bold" text-anchor="middle" fill="#000" font-family='"Liberation Sans",sans-serif'>X1</text><text transform="translate(40 128.500) rotate(-90)" font-size="16.500" font-weight="bold" text-anchor="middle" fill="#000" font-family='"Liberation Sans",sans-serif'>Density</text></svg>
<div class="btn" style="left:817px;top:441px;width:24px;height:23px;"></div>
<svg class="abs" style="left:820px;top:444px" width="18" height="18" viewBox="0 0 18 18">
<defs><radialGradient id="ig" cx=".45" cy=".25" r=".85"><stop offset="0" stop-color="#4585e0"/><stop offset=".6" stop-color="#1556b8"/><stop offset="1" stop-color="#0a3f96"/></radialGradient></defs>
<circle cx="9" cy="8.500" r="7.300" fill="url(#ig)" stroke="#0b3a88" stroke-width=".7"/>
<circle cx="9" cy="4.700" r="1.450" fill="#fff"/><path d="M7.400 7.100h2.900v5.600h-2.200v-4.300h-.7z" fill="#fff"/>
</svg>
<span class="t" id="t_parameters" style="top:470.00px;font-size:15px;font-weight:normal;color:#141414;letter-spacing:0.097px;-webkit-text-stroke:.3px;left:817.5px;">Parameters</span>
<div style="left:818px;top:491px;width:356px;height:110px;background:#ece8e4;border:1px solid #dcd8d2;border-radius:2px;"></div>
<span class="t" id="t_type" style="top:505.00px;font-size:15px;font-weight:normal;color:#141414;letter-spacing:-0.133px;-webkit-text-stroke:.3px;left:829.5px;">Type</span>
<div class="btn" style="left:868px;top:502px;width:294px;height:25px;"></div>
<svg class="abs" style="left:1147px;top:513px" width="8" height="4"><path d="M0 0h8l-4 4z" fill="#4c4c4c"/></svg>
<span class="t" id="t_ab" style="top:504.60px;font-size:15px;font-weight:normal;color:#141414;letter-spacing:0.090px;-webkit-text-stroke:.3px;left:873px;">α, β</span>
<span class="t" id="t_alpha" style="top:536.00px;font-size:15px;font-weight:normal;color:#141414;letter-spacing:1.200px;-webkit-text-stroke:.3px;left:829.5px;">α</span>
<div class="edit" style="left:868px;top:533px;width:294px;height:25px;"></div>
<span class="t" id="t_alphav" style="top:536.00px;font-size:15px;font-weight:normal;color:#141414;letter-spacing:0.017px;-webkit-text-stroke:.3px;left:871px;">1.28254983016</span>
<span class="t" id="t_beta" style="top:567.00px;font-size:15px;font-weight:normal;color:#141414;letter-spacing:1.200px;-webkit-text-stroke:.3px;left:829.5px;">β</span>
<div class="edit" style="left:868px;top:564px;width:294px;height:25px;"></div>
<span class="t" id="t_betav" style="top:567.00px;font-size:15px;font-weight:normal;color:#141414;letter-spacing:0.025px;-webkit-text-stroke:.3px;left:870.7px;">-0.450053207546</span>
<span class="t" id="t_trunc" style="top:607.00px;font-size:15px;font-weight:bold;color:#111;letter-spacing:0.032px;left:817.5px;">Truncation parameters</span>
<svg class="abs" style="left:983px;top:613px" width="10" height="6"><path d="M0 0h10l-5 5.500z" fill="#3c3c3c"/></svg>
<div style="left:835px;top:640px;width:14px;height:14px;background:#fff;border:1px solid #bdb9b2;border-radius:1px;"></div><svg class="abs" style="left:835px;top:640px" width="14" height="14" viewBox="0 0 14 14"><path d="M3.400 6.700L6.200 10.800L10.500 3.300" fill="none" stroke="#0c0c0c" stroke-width="1.900" stroke-linecap="round" stroke-linejoin="round"/></svg>
<span class="t" id="t_lower" style="top:637.80px;font-size:15px;font-weight:normal;color:#141414;letter-spacing:0.206px;-webkit-text-stroke:.3px;left:854.5px;">Lower bound</span>
<div class="edit" style="left:956px;top:635px;width:209px;height:25px;"></div>
<span class="t" id="t_lowerv" style="top:637.80px;font-size:15px;font-weight:normal;color:#141414;letter-spacing:-0.422px;-webkit-text-stroke:.3px;left:959.2px;">-1</span>
<div style="left:835px;top:671px;width:14px;height:14px;background:#fff;border:1px solid #bdb9b2;border-radius:1px;"></div>
<span class="t" id="t_upper" style="top:668.80px;font-size:15px;font-weight:normal;color:#141414;letter-spacing:0.206px;-webkit-text-stroke:.3px;left:854.5px;">Upper bound</span>
<div style="left:956px;top:666px;width:209px;height:25px;background:#efebe7;border:1px solid #c0bcb5;border-radius:3px;"></div>
<svg class="abs" style="left:1205px;top:778px" width="17" height="15" viewBox="0 0 17 15"><rect x="14" y="3" width="1" height="1" fill="#a09c96"/><rect x="15" y="4" width="1" height="1" fill="#fbfaf8"/><rect x="14" y="6" width="1" height="1" fill="#a09c96"/><rect x="15" y="7" width="1" height="1" fill="#fbfaf8"/><rect x="11" y="6" width="1" height="1" fill="#a09c96"/><rect x="12" y="7" width="1" height="1" fill="#fbfaf8"/><rect x="14" y="9" width="1" height="1" fill="#a09c96"/><rect x="15" y="10" width="1" height="1" fill="#fbfaf8"/><rect x="11" y="9" width="1" height="1" fill="#a09c96"/><rect x="12" y="10" width="1" height="1" fill="#fbfaf8"/><rect x="8" y="9" width="1" height="1" fill="#a09c96"/><rect x="9" y="10" width="1" height="1" fill="#fbfaf8"/><rect x="14" y="12" width="1" height="1" fill="#a09c96"/><rect x="15" y="13" width="1" height="1" fill="#fbfaf8"/><rect x="11" y="12" width="1" height="1" fill="#a09c96"/><rect x="12" y="13" width="1" height="1" fill="#fbfaf8"/><rect x="8" y="12" width="1" height="1" fill="#a09c96"/><rect x="9" y="13" width="1" height="1" fill="#fbfaf8"/><rect x="5" y="12" width="1" height="1" fill="#a09c96"/><rect x="6" y="13" width="1" height="1" fill="#fbfaf8"/></svg>
<div style="left:232px;top:246px;width:251px;height:117px;background:#fff;border:1px solid #9f9c97;box-shadow:1px 1px 1px rgba(0,0,0,.13);"></div>
<svg class="abs" style="left:239px;top:251px" width="17" height="15" viewBox="0 0 17 15">
<rect x="1.500" y=".5" width="14" height="13.500" fill="#fdfdfd" stroke="#d4d4d4"/>
<rect x="1.500" y=".5" width="14" height="2.500" fill="#ececec" stroke="#d4d4d4"/>
<path d="M6.500 3v11M10.500 3v11" stroke="#d9d9d9"/></svg>
<span class="t" id="t_cm_doe" style="top:248.70px;font-size:15px;font-weight:normal;color:#141414;letter-spacing:0.226px;-webkit-text-stroke:.3px;left:260.5px;">Design of experiments</span>
<svg class="abs" style="left:238px;top:275px" width="18" height="17" viewBox="0 0 18 17">
<path d="M2.500 1v15M1 14.500h16" fill="none" stroke="#4a4a4a" stroke-width=".9"/>
<path d="M5.500 14.500v1.500M8.500 14.500v1.500M11.500 14.500v1.500M14.500 14.500v1.500" stroke="#6a6a6a" stroke-width=".7"/>
<path d="M2 1.500C3.500 7.500 5.200 10.600 7.600 10.200C9.700 9.800 10.500 8.200 12.200 8.800C14 9.500 15.500 11.800 16.800 14" fill="none" stroke="#e2344c" stroke-width="1"/>
<path d="M6.500 3h1.800v2h-1.800zM9 3.500h1.300M9 4.700h1.300M11 3h1.800v2h-1.800z" fill="none" stroke="#9a9a9a" stroke-width=".6"/></svg>
<span class="t" id="t_cm_limit" style="top:273.80px;font-size:15px;font-weight:normal;color:#141414;letter-spacing:0.358px;-webkit-text-stroke:.3px;left:260.5px;">Limit state</span>
<span class="t" id="t_cm_analysis" style="top:294.50px;font-size:15px;font-weight:normal;color:#141414;letter-spacing:-0.032px;-webkit-text-stroke:.3px;left:237.4px;">Analysis</span>
<div style="left:297px;top:304px;width:181px;height:1px;background:#cfcbc5;"></div>
<svg class="abs" style="left:238px;top:319px" width="18" height="14" viewBox="0 0 18 14">
<path d="M.8 12.700q3.600-.4 5.200-5.400t2.800-5t2.800 5t5.200 5.400" fill="none" stroke="#2a35e0" stroke-width=".9"/>
<path d="M4.800 12.500v-2.200M6.700 12.500v-6.200M8.800 12.500v-9.500M10.900 12.500v-6.200M12.800 12.500v-2.200" stroke="#e8121d" stroke-width="1.400"/></svg>
<span class="t" id="t_cm_central" style="top:316.00px;font-size:15px;font-weight:normal;color:#141414;letter-spacing:0.193px;-webkit-text-stroke:.3px;left:260.5px;">Central tendency</span>
<svg class="abs" style="left:238px;top:342px" width="18" height="18" viewBox="0 0 18 18">
<path d="M2.500 1v15M1 15.500h15.500" fill="none" stroke="#8a8a8a" stroke-width=".8" stroke-dasharray="1.200 .8"/>
<path d="M5.500 15.500v1.500M8.500 15.500v1.500M11.500 15.500v1.500M14.500 15.500v1.500M1 3.500h1.500M1 6.500h1.500M1 9.500h1.500M1 12.500h1.500" stroke="#9a9a9a" stroke-width=".7"/>
<g fill="#c2279e"><rect x="5.200" y="3.200" width="1.500" height="1.500"/><rect x="7.500" y="3.200" width="1.500" height="1.500"/><rect x="5.200" y="5.500" width="1.500" height="1.500"/><rect x="7.500" y="5.500" width="1.500" height="1.500"/>
<rect x="11.700" y="9.500" width="1.500" height="1.500"/><rect x="14" y="9.500" width="1.500" height="1.500"/><rect x="11.700" y="11.800" width="1.500" height="1.500"/><rect x="14" y="11.800" width="1.500" height="1.500"/></g>
<g stroke="#1f6cf0" stroke-width=".9" fill="none"><path d="M11.300 5.200h4.400M13.500 3v4.400M5 11.500h4.400M7.200 9.300v4.400"/></g></svg>
<span class="t" id="t_cm_sens" style="top:340.80px;font-size:15px;font-weight:normal;color:#141414;letter-spacing:0.224px;-webkit-text-stroke:.3px;left:260.5px;">Sensitivity</span>
<svg class="abs" style="left:230.300px;top:244.200px" width="12.700" height="20" viewBox="0 0 14 22">
<path d="M1 1v16.500l3.800-3.600l2.700 6.300l2.600-1.100l-2.700-6.200h5.300z" fill="#fff" stroke="#000" stroke-width="1.100" stroke-linejoin="round"/></svg>
</body></html>
